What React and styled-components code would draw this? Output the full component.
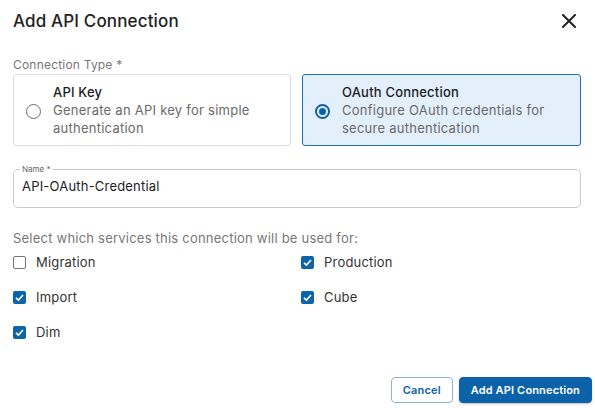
import styled, { createGlobalStyle } from "styled-components";

const GlobalStyle = createGlobalStyle`
	html, body {
		margin: 0;
		padding: 0;
		background: #ffffff;
	}
	body {
		font-family: "Inter", "Open Sans", sans-serif;
		color: #222;
	}
	* {
		box-sizing: border-box;
	}
`;

const services = [
	{ label: "Migration", checked: false },
	{ label: "Production", checked: true },
	{ label: "Import", checked: true },
	{ label: "Cube", checked: true },
	{ label: "Dim", checked: true },
];

function CloseIcon() {
	return (
		<svg width="14" height="14" viewBox="0 0 14 14">
			<path d="M1 1 L13 13 M13 1 L1 13" stroke="#222" strokeWidth="2" strokeLinecap="square" />
		</svg>
	);
}

function Check({ checked }) {
	return (
		<Box $checked={checked}>
			{checked && (
				<svg width="11" height="11" viewBox="0 0 11 11">
					<path d="M2 5.8 L4.4 8 L9 3" fill="none" stroke="#fff" strokeWidth="1.6" />
				</svg>
			)}
		</Box>
	);
}

export default function App() {
	return (
		<>
			<GlobalStyle />
			<Dialog>
				<Header>
					<Title>Add API Connection</Title>
					<CloseButton>
						<CloseIcon />
					</CloseButton>
				</Header>

				<Label>Connection Type *</Label>
				<Cards>
					<Card>
						<Radio />
						<CardText>
							<CardTitle>API Key</CardTitle>
							<CardDesc>Generate an API key for simple authentication</CardDesc>
						</CardText>
					</Card>
					<Card $selected>
						<Radio $selected />
						<CardText>
							<CardTitle>OAuth Connection</CardTitle>
							<CardDesc>Configure OAuth credentials for secure authentication</CardDesc>
						</CardText>
					</Card>
				</Cards>

				<Field>
					<Legend>Name *</Legend>
					<Value>API-OAuth-Credential</Value>
				</Field>

				<Hint>Select which services this connection will be used for:</Hint>
				<Services>
					{services.map((s) => (
						<Service key={s.label}>
							<Check checked={s.checked} />
							<span>{s.label}</span>
						</Service>
					))}
				</Services>

				<Footer>
					<Button>Cancel</Button>
					<Button $primary>Add API Connection</Button>
				</Footer>
			</Dialog>
		</>
	);
}

const Dialog = styled.div`
	width: 595px;
	height: 408px;
	padding: 0 14px 0 13px;
	display: flex;
	flex-direction: column;
`;

const Header = styled.div`
	height: 40px;
	display: flex;
	align-items: center;
	justify-content: space-between;
	padding-top: 1px;
`;

const Title = styled.h2`
	margin: 0;
	font-size: 17px;
	font-weight: 500;
	letter-spacing: 0.15px;
	color: #222;
`;

const CloseButton = styled.div`
	width: 14px;
	height: 14px;
	margin-right: 5px;
	display: flex;
`;

const Label = styled.div`
	margin-top: 18px;
	font-size: 12px;
	color: #777;
	line-height: 14px;
	letter-spacing: 0.2px;
`;

const Cards = styled.div`
	margin-top: 2px;
	display: grid;
	grid-template-columns: 278px 279px;
	gap: 11px;
`;

const Card = styled.div`
	height: 72px;
	border: 1px solid ${(p) => (p.$selected ? "#1f6fbd" : "#dcdcdc")};
	background: ${(p) => (p.$selected ? "#e3f0fc" : "#fff")};
	border-radius: 3px;
	display: flex;
	align-items: center;
	padding: 0 0 0 12px;
	gap: 12px;
`;

const Radio = styled.div`
	width: 15px;
	height: 15px;
	border-radius: 50%;
	flex-shrink: 0;
	margin-top: 2px;
	border: ${(p) => (p.$selected ? "2px solid #0c62a8" : "1.5px solid #6b6b6b")};
	display: flex;
	align-items: center;
	justify-content: center;

	&::after {
		content: "";
		width: 7px;
		height: 7px;
		border-radius: 50%;
		background: #0c62a8;
		display: ${(p) => (p.$selected ? "block" : "none")};
	}
`;

const CardText = styled.div`
	display: flex;
	flex-direction: column;
	margin-top: -1px;
`;

const CardTitle = styled.div`
	font-size: 13px;
	font-weight: 500;
	color: #1d1d1d;
	line-height: 18px;
	letter-spacing: 0.2px;
`;

const CardDesc = styled.div`
	font-size: 13px;
	color: #6a6a6a;
	line-height: 18px;
	letter-spacing: 0.25px;
	width: 215px;
`;

const Field = styled.fieldset`
	margin: 18px 0 0;
	width: 568px;
	height: 44px;
	border: 1px solid #c9c9c9;
	border-radius: 5px;
	padding: 0 8px;
`;

const Legend = styled.legend`
	font-size: 8px;
	color: #666;
	padding: 0 2px;
	margin-left: -2px;
	line-height: 10px;
`;

const Value = styled.div`
	font-size: 13px;
	color: #222;
	line-height: 18px;
	padding-top: 3px;
	letter-spacing: 0.2px;
`;

const Hint = styled.div`
	margin-top: 22px;
	font-size: 13px;
	color: #777;
	line-height: 16px;
	letter-spacing: 0.22px;
`;

const Services = styled.div`
	margin-top: 7px;
	display: grid;
	grid-template-columns: 288px 1fr;
	row-gap: 17px;
`;

const Service = styled.label`
	display: flex;
	align-items: center;
	gap: 10px;
	font-size: 13px;
	color: #333;
	height: 18px;
	letter-spacing: 0.2px;
`;

const Box = styled.span`
	width: 13px;
	height: 13px;
	border-radius: 2px;
	border: ${(p) => (p.$checked ? "none" : "1.5px solid #777")};
	background: ${(p) => (p.$checked ? "#0d65a9" : "#fff")};
	display: flex;
	align-items: center;
	justify-content: center;
`;

const Footer = styled.div`
	margin-top: auto;
	margin-bottom: 5px;
	margin-right: -11px;
	display: flex;
	justify-content: flex-end;
	gap: 6px;
`;

const Button = styled.button`
	height: 26px;
	padding: 0 11px;
	border-radius: 4px;
	font-family: "Inter", sans-serif;
	font-size: 11px;
	font-weight: 600;
	letter-spacing: 0.15px;
	border: 1px solid ${(p) => (p.$primary ? "#0c62a8" : "#8bb3d8")};
	background: ${(p) => (p.$primary ? "#0c62a8" : "#fff")};
	color: ${(p) => (p.$primary ? "#fff" : "#0c62a8")};
	box-shadow: ${(p) => (p.$primary ? "0 1px 2px rgba(0,0,0,0.25)" : "none")};
`;
